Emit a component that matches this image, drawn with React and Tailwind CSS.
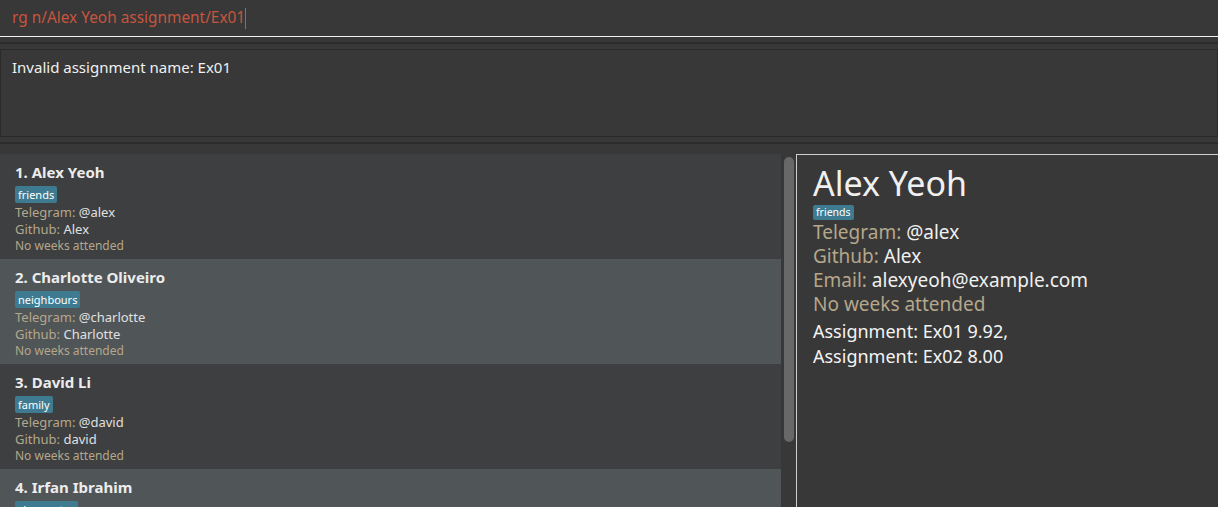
import React from 'react';

const persons = [
  { name: 'Alex Yeoh', tag: 'friends', telegram: '@alex', github: 'Alex' },
  { name: 'Charlotte Oliveiro', tag: 'neighbours', telegram: '@charlotte', github: 'Charlotte' },
  { name: 'David Li', tag: 'family', telegram: '@david', github: 'david' },
  { name: 'Irfan Ibrahim', tag: 'classmates', telegram: '@irfan', github: 'Irfan' },
];

const PersonCard = ({ person, index }) => {
  const even = index % 2 === 1;
  return (
    <div className={`h-[105px] shrink-0 pl-[15px] pt-[8px] ${even ? 'bg-[#505558]' : 'bg-[#3d3f41]'}`}>
      <div className="text-[15px] leading-[21px] font-bold text-[#ececec]">
        {index + 1}. {person.name}
      </div>
      <div className="mt-[3px] flex">
        <span className="h-[17px] px-[3px] rounded-[2px] bg-[#3e7b91] text-white text-[11px] leading-[17px]">
          {person.tag}
        </span>
      </div>
      <div className="pt-[1px] text-[13px] leading-[17px]">
        <span className="text-[#b5a78b]">Telegram: </span>
        <span className="text-[#e0e0e0]">{person.telegram}</span>
      </div>
      <div className="text-[13px] leading-[17px]">
        <span className="text-[#b5a78b]">Github: </span>
        <span className="text-[#e0e0e0]">{person.github}</span>
      </div>
      <div className="text-[12px] leading-[16px] text-[#b5a78b]">No weeks attended</div>
    </div>
  );
};

const App = () => {
  return (
    <div
      className="w-[1218px] h-[507px] overflow-hidden bg-[#383838] flex flex-col"
      style={{ fontFamily: '"Noto Sans", "Open Sans", sans-serif' }}
    >
      {/* command box */}
      <div className="h-[37px] shrink-0 border-b border-[#f2f2f2] pl-[12px] flex items-center">
        <span className="text-[15.4px] text-[#c7553f]">rg n/Alex Yeoh assignment/Ex01</span>
        <span className="w-[1px] h-[21px] bg-[#c7553f]"></span>
      </div>
      <div className="h-[5px] shrink-0"></div>
      <div className="h-[2px] shrink-0 bg-[#2c2c2c]"></div>
      <div className="h-[5px] shrink-0"></div>

      {/* result box */}
      <div className="h-[88px] shrink-0 border border-[#2a2a2a] pl-[11px] pt-[6px]">
        <div className="text-[15px] leading-[22px] text-[#f0f0f0]">Invalid assignment name: Ex01</div>
      </div>
      <div className="h-[5px] shrink-0"></div>
      <div className="h-[2px] shrink-0 bg-[#2c2c2c]"></div>
      <div className="h-[10px] shrink-0"></div>

      {/* main area */}
      <div className="flex flex-1 min-h-0">
        <div className="w-[781px] flex flex-col overflow-hidden">
          {persons.map((p, i) => (
            <PersonCard key={p.name} person={p} index={i} />
          ))}
        </div>
        <div className="w-[15px] pl-[3px] pt-[3px]">
          <div className="w-[10px] h-[285px] rounded-[5px] bg-[#686868]"></div>
        </div>
        <div className="flex-1 border-l border-t border-[#cfcfcf] pl-[16px] pt-[6px]">
          <div className="text-[34px] leading-[44px] text-[#f0f0f0]">Alex Yeoh</div>
          <div className="flex">
            <span className="h-[15px] px-[3px] rounded-[2px] bg-[#3e7b91] text-white text-[10.5px] leading-[15px]">
              friends
            </span>
          </div>
          <div className="text-[19px] leading-[24px]">
            <span className="text-[#b5a78b]">Telegram: </span>
            <span className="text-[#f0f0f0]">@alex</span>
          </div>
          <div className="text-[19px] leading-[24px]">
            <span className="text-[#b5a78b]">Github: </span>
            <span className="text-[#f0f0f0]">Alex</span>
          </div>
          <div className="text-[19px] leading-[24px]">
            <span className="text-[#b5a78b]">Email: </span>
            <span className="text-[#f0f0f0]">alexyeoh@example.com</span>
          </div>
          <div className="text-[19px] leading-[24px] text-[#b5a78b]">No weeks attended</div>
          <div className="mt-[3px] text-[18px] leading-[25px] text-[#f4f4f4]">
            <div>Assignment: Ex01 9.92,</div>
            <div>Assignment: Ex02 8.00</div>
          </div>
        </div>
      </div>
    </div>
  );
};

export default App;
